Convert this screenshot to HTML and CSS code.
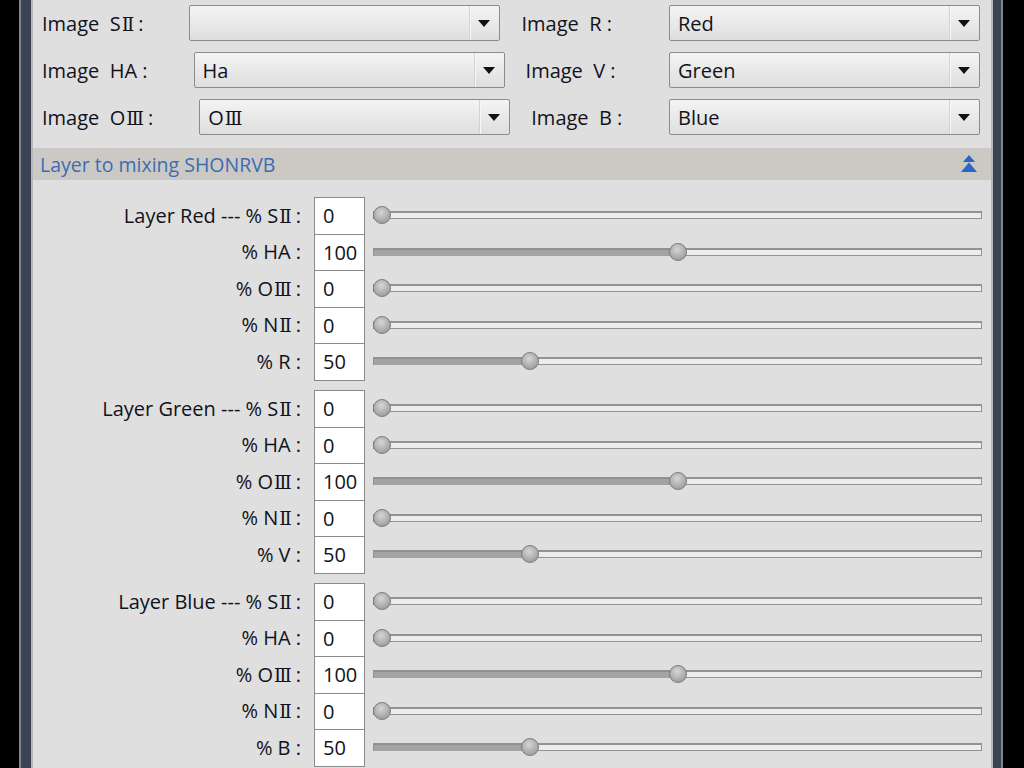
FILE: index.html
```html
<!DOCTYPE html>
<html>
<head>
<meta charset="utf-8">
<link rel="stylesheet" href="styles.css">
</head>
<body>
<div class="frame"><div class="frame-mid"><div class="panel">
  <div class="images">
    <div class="img-row">
      <span class="lbl">Image&nbsp; S<span class="rn">Ⅱ</span>:</span>
      <div class="combo left"><span class="val"></span><span class="arrow"></span></div>
      <span class="rlbl">Image&nbsp; R :</span>
      <div class="combo right"><span class="val">Red</span><span class="arrow"></span></div>
    </div>
    <div class="img-row">
      <span class="lbl">Image&nbsp; HA&nbsp;:</span>
      <div class="combo left"><span class="val">Ha</span><span class="arrow"></span></div>
      <span class="rlbl">Image&nbsp; V :</span>
      <div class="combo right"><span class="val">Green</span><span class="arrow"></span></div>
    </div>
    <div class="img-row">
      <span class="lbl">Image&nbsp; O<span class="rn">Ⅲ</span>:</span>
      <div class="combo left"><span class="val">O<span class="rn">Ⅲ</span></span><span class="arrow"></span></div>
      <span class="rlbl">Image&nbsp; B :</span>
      <div class="combo right"><span class="val">Blue</span><span class="arrow"></span></div>
    </div>
  </div>

  <div class="section-head">
    <span class="section-title">Layer to mixing SHONRVB</span>
    <svg class="collapse" width="16" height="18" viewBox="0 0 16 18"><path d="M8 0 L14 7 L2 7 Z" fill="#2a66c4"/><path d="M8 7.5 L16 17 L0 17 Z" fill="#2a66c4"/></svg>
  </div>

  <div class="mix">
    <div class="group">
      <div class="mrow"><span class="mlbl">Layer Red --- % S<span class="rn">Ⅱ</span>:</span><span class="num">0</span><div class="slider" style="--v:0"><div class="fill"></div><div class="thumb"></div></div></div>
      <div class="mrow"><span class="mlbl">% HA :</span><span class="num">100</span><div class="slider" style="--v:100"><div class="fill"></div><div class="thumb"></div></div></div>
      <div class="mrow"><span class="mlbl">% O<span class="rn">Ⅲ</span>:</span><span class="num">0</span><div class="slider" style="--v:0"><div class="fill"></div><div class="thumb"></div></div></div>
      <div class="mrow"><span class="mlbl">% N<span class="rn">Ⅱ</span>:</span><span class="num">0</span><div class="slider" style="--v:0"><div class="fill"></div><div class="thumb"></div></div></div>
      <div class="mrow"><span class="mlbl">% R :</span><span class="num">50</span><div class="slider" style="--v:50"><div class="fill"></div><div class="thumb"></div></div></div>
    </div>
    <div class="group">
      <div class="mrow"><span class="mlbl">Layer Green --- % S<span class="rn">Ⅱ</span>:</span><span class="num">0</span><div class="slider" style="--v:0"><div class="fill"></div><div class="thumb"></div></div></div>
      <div class="mrow"><span class="mlbl">% HA :</span><span class="num">0</span><div class="slider" style="--v:0"><div class="fill"></div><div class="thumb"></div></div></div>
      <div class="mrow"><span class="mlbl">% O<span class="rn">Ⅲ</span>:</span><span class="num">100</span><div class="slider" style="--v:100"><div class="fill"></div><div class="thumb"></div></div></div>
      <div class="mrow"><span class="mlbl">% N<span class="rn">Ⅱ</span>:</span><span class="num">0</span><div class="slider" style="--v:0"><div class="fill"></div><div class="thumb"></div></div></div>
      <div class="mrow"><span class="mlbl">% V :</span><span class="num">50</span><div class="slider" style="--v:50"><div class="fill"></div><div class="thumb"></div></div></div>
    </div>
    <div class="group">
      <div class="mrow"><span class="mlbl">Layer Blue --- % S<span class="rn">Ⅱ</span>:</span><span class="num">0</span><div class="slider" style="--v:0"><div class="fill"></div><div class="thumb"></div></div></div>
      <div class="mrow"><span class="mlbl">% HA :</span><span class="num">0</span><div class="slider" style="--v:0"><div class="fill"></div><div class="thumb"></div></div></div>
      <div class="mrow"><span class="mlbl">% O<span class="rn">Ⅲ</span>:</span><span class="num">100</span><div class="slider" style="--v:100"><div class="fill"></div><div class="thumb"></div></div></div>
      <div class="mrow"><span class="mlbl">% N<span class="rn">Ⅱ</span>:</span><span class="num">0</span><div class="slider" style="--v:0"><div class="fill"></div><div class="thumb"></div></div></div>
      <div class="mrow"><span class="mlbl">% B :</span><span class="num">50</span><div class="slider" style="--v:50"><div class="fill"></div><div class="thumb"></div></div></div>
    </div>
  </div>
</div></div></div>
</body>
</html>
```

FILE: styles.css
```css
html, body {
  margin: 0;
  padding: 0;
  background: #000;
  height: 768px;
  overflow: hidden;
}
body {
  font-family: "Open Sans", "DejaVu Sans", sans-serif;
  font-size: 20px;
  color: #12121b;
}
.rn {
  font-family: "DejaVu Serif", serif;
  font-size: 0.92em;
  margin-left: 1px;
  margin-right: 4px;
}
.frame {
  margin-left: 19px;
  width: 980px;
  height: 768px;
  border-left: 2px solid #7f858d;
  border-right: 2px solid #7f858d;
}
.frame-mid {
  height: 100%;
  border-left: 10px solid #3b4452;
  border-right: 8px solid #3b4452;
}
.panel {
  height: 100%;
  border-left: 2px solid #b3b8bf;
  border-right: 2px solid #b3b8bf;
  background: #dfdfdf;
  box-sizing: border-box;
}
.images {
  padding: 5px 11px 0 9px;
  display: flex;
  flex-direction: column;
  gap: 11px;
}
.img-row {
  display: flex;
  align-items: center;
  height: 36px;
}
.lbl {
  margin-right: 46px;
  white-space: nowrap;
}
.rlbl {
  flex: 1;
  padding-left: 21px;
  white-space: nowrap;
}
.combo {
  height: 36px;
  box-sizing: border-box;
  border: 1px solid #8c8c8c;
  border-radius: 2px;
  background: linear-gradient(#f4f4f4, #e9e9e9 50%, #dedede);
  display: flex;
  align-items: center;
}
.combo.left { width: 311px; }
.combo.right { width: 311px; }
.val {
  flex: 1;
  padding-left: 8px;
  white-space: nowrap;
}
.arrow {
  width: 30px;
  height: 100%;
  box-sizing: border-box;
  border-left: 1px solid #d3d3d3;
  box-shadow: inset 1px 0 0 #f7f7f7;
  position: relative;
}
.arrow::after {
  content: "";
  position: absolute;
  left: 8px;
  top: 14px;
  border-left: 6px solid transparent;
  border-right: 6px solid transparent;
  border-top: 7px solid #111;
}
.section-head {
  margin-top: 13px;
  height: 32px;
  background: #ccc9c4;
  display: flex;
  align-items: center;
  justify-content: space-between;
  padding: 0 14px 0 7px;
}
.section-title {
  color: #3a6db6;
  font-size: 19.5px;
}
.collapse {
  display: block;
}
.mix {
  padding: 17px 9px 0 0;
  display: flex;
  flex-direction: column;
  gap: 10.5px;
}
.group {
  display: flex;
  flex-direction: column;
}
.mrow {
  height: 36.5px;
  display: flex;
  align-items: center;
}
.mlbl {
  width: 268px;
  text-align: right;
  padding-right: 13px;
  white-space: nowrap;
}
.num {
  width: 51px;
  height: 37.5px;
  box-sizing: border-box;
  border: 1px solid #8a8a8a;
  background: #fff;
  padding-left: 8px;
  display: flex;
  align-items: center;
  margin-right: 8px;
  align-self: flex-start;
}
.slider {
  flex: 1;
  height: 8px;
  box-sizing: border-box;
  border: 1px solid #929292;
  border-top-width: 2px;
  background: #ececec;
  position: relative;
  --pos: calc(8px + var(--v) / 200 * 591px);
}
.fill {
  position: absolute;
  left: 0;
  top: -1px;
  bottom: -1px;
  width: var(--pos);
  background: #a3a3a3;
  border-top: 1px solid #8e8e8e;
  box-sizing: border-box;
}
.thumb {
  position: absolute;
  top: 50%;
  left: var(--pos);
  width: 18px;
  height: 18px;
  margin: -9.5px 0 0 -9px;
  border-radius: 50%;
  box-sizing: border-box;
  border: 1px solid #7c7c7c;
  background: radial-gradient(circle at 45% 35%, #d6d6d6 0%, #b5b5b5 45%, #8f8f8f 100%);
}
```
